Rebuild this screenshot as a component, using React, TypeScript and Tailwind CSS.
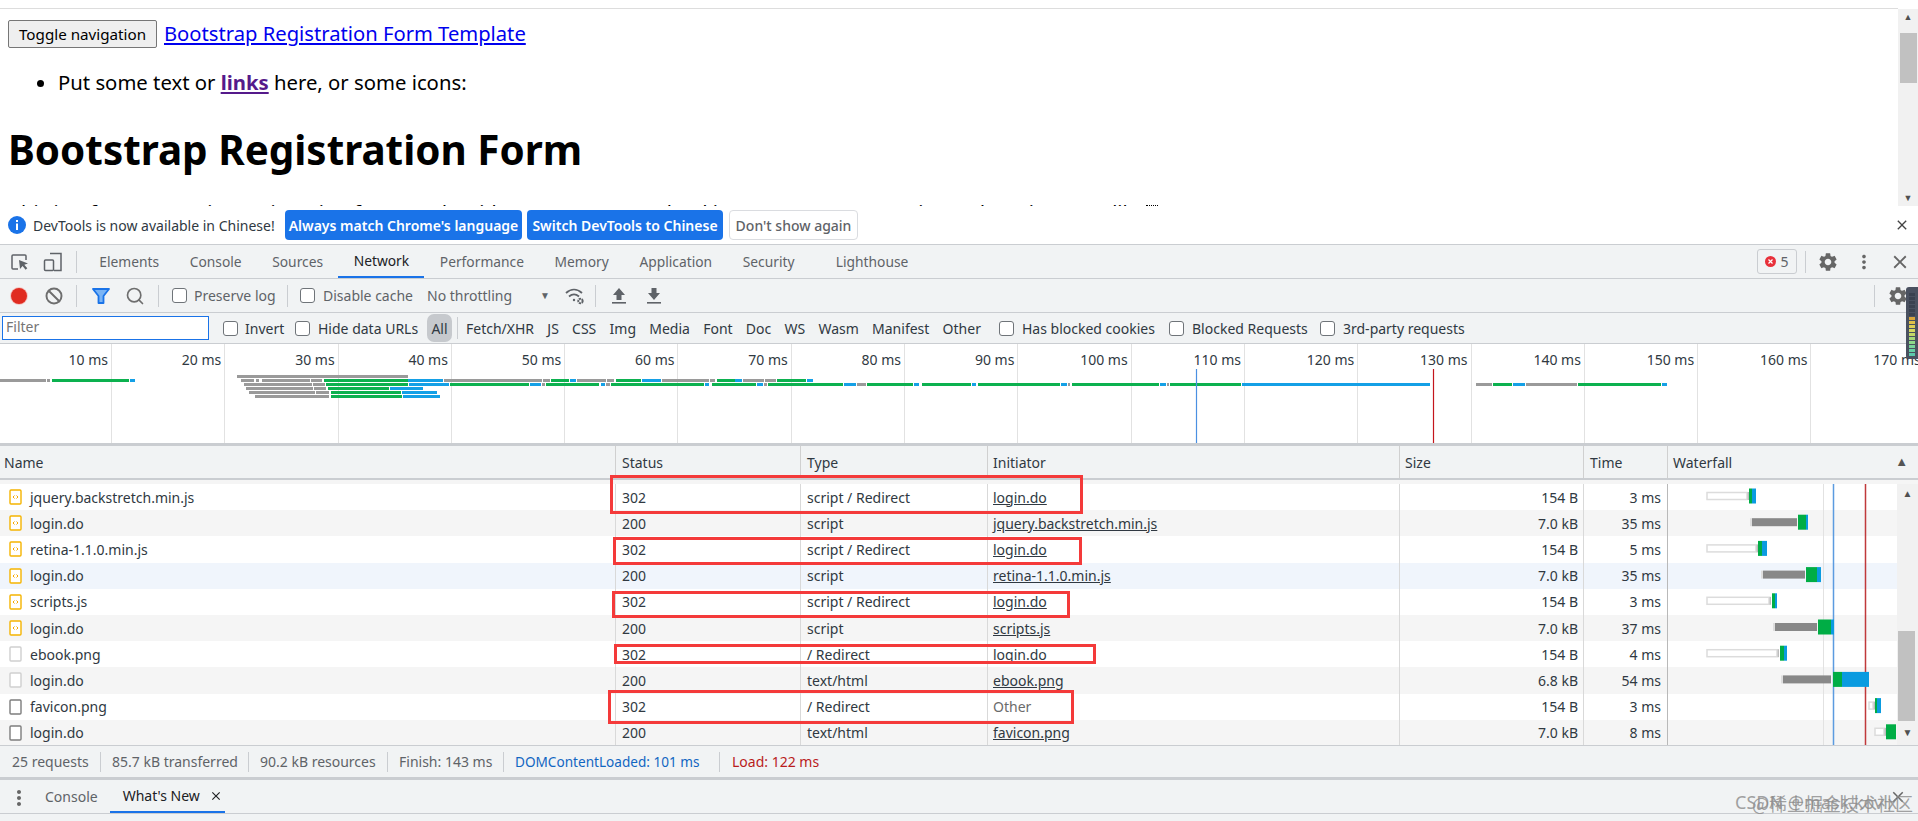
import React from 'react';
import { MdClose, MdMoreVert, MdSettings } from 'react-icons/md';
import { Ban, Search } from 'lucide-react';

const tabs = [
  { label: 'Elements', cls: 'px-[15.3px] text-[#5f6368]' },
  { label: 'Console', cls: 'px-[15.3px] text-[#5f6368]' },
  { label: 'Sources', cls: 'px-[15.3px] text-[#5f6368]' },
  { label: 'Network', cls: 'px-[15.3px] text-[#202124] border-b-[2px] border-[#1a73e8]' },
  { label: 'Performance', cls: 'px-[15.3px] text-[#5f6368]' },
  { label: 'Memory', cls: 'px-[15.3px] text-[#5f6368]' },
  { label: 'Application', cls: 'px-[15.3px] text-[#5f6368]' },
  { label: 'Security', cls: 'px-[15.3px] text-[#5f6368]' },
  { label: 'Lighthouse', cls: 'pl-[26px] pr-[15px] text-[#5f6368]' },
];

const kinds = ['Fetch/XHR', 'JS', 'CSS', 'Img', 'Media', 'Font', 'Doc', 'WS', 'Wasm', 'Manifest', 'Other'];
const ticks = [10, 20, 30, 40, 50, 60, 70, 80, 90, 100, 110, 120, 130, 140, 150, 160, 170];

const rows = [
  { name: 'jquery.backstretch.min.js', status: '302', type: 'script / Redirect', init: 'login.do', size: '154 B', time: '3 ms', icon: 'js', bg: 'bg-white' },
  { name: 'login.do', status: '200', type: 'script', init: 'jquery.backstretch.min.js', size: '7.0 kB', time: '35 ms', icon: 'js', bg: 'bg-[#f5f5f5]' },
  { name: 'retina-1.1.0.min.js', status: '302', type: 'script / Redirect', init: 'login.do', size: '154 B', time: '5 ms', icon: 'js', bg: 'bg-white' },
  { name: 'login.do', status: '200', type: 'script', init: 'retina-1.1.0.min.js', size: '7.0 kB', time: '35 ms', icon: 'js', bg: 'bg-[#f0f5fc]' },
  { name: 'scripts.js', status: '302', type: 'script / Redirect', init: 'login.do', size: '154 B', time: '3 ms', icon: 'js', bg: 'bg-white' },
  { name: 'login.do', status: '200', type: 'script', init: 'scripts.js', size: '7.0 kB', time: '37 ms', icon: 'js', bg: 'bg-[#f5f5f5]' },
  { name: 'ebook.png', status: '302', type: '/ Redirect', init: 'login.do', size: '154 B', time: '4 ms', icon: 'light', bg: 'bg-white' },
  { name: 'login.do', status: '200', type: 'text/html', init: 'ebook.png', size: '6.8 kB', time: '54 ms', icon: 'light', bg: 'bg-[#f5f5f5]' },
  { name: 'favicon.png', status: '302', type: '/ Redirect', init: 'Other', size: '154 B', time: '3 ms', icon: 'dark', bg: 'bg-white' },
  { name: 'login.do', status: '200', type: 'text/html', init: 'favicon.png', size: '7.0 kB', time: '8 ms', icon: 'dark', bg: 'bg-[#f5f5f5]' },
];

const redBoxes = [
  'left-[610px] top-[475px] w-[473px] h-[39px]',
  'left-[613px] top-[537px] w-[469px] h-[28px]',
  'left-[612px] top-[591px] w-[458px] h-[27px]',
  'left-[614px] top-[644px] w-[482px] h-[20px]',
  'left-[608px] top-[690px] w-[466px] h-[34px]',
];

const meter = [
  'bg-[#3b4250]', 'bg-[#3b4250]', 'bg-[#3b4250]', 'bg-[#3b4250]', 'bg-[#3b4250]', 'bg-[#3b4250]',
  'bg-[#d9a53a]', 'bg-[#dfc04a]', 'bg-[#dccf55]', 'bg-[#d5d860]', 'bg-[#c2d868]', 'bg-[#a5d878]',
  'bg-[#8ed88a]', 'bg-[#78d49a]', 'bg-[#66cfa5]', 'bg-[#5cc9ab]',
];

const G = '#0cb14f';
const B = '#14a0e6';
const S = '#9a9a9a';

// overview segments: y, then x1, x2, colour
const overview: [number, number, number, string][] = [
  [379, 0, 46, S], [379, 47, 50, S], [379, 52, 129, G], [379, 130, 135, B],
  [375, 237, 408, S],
  [379, 241, 254, S], [379, 256, 259, S], [379, 262, 310, S], [379, 311, 322, S], [379, 324, 408, G], [379, 408, 443, B],
  [379, 444, 542, S], [379, 543, 550, S], [379, 551, 569, G], [379, 570, 576, B], [379, 577, 606, S], [379, 607, 614, S],
  [379, 616, 641, G], [379, 642, 661, B], [379, 662, 709, S], [379, 710, 715, S], [379, 717, 735, G], [379, 735, 742, B],
  [379, 743, 764, S], [379, 765, 776, S], [379, 777, 806, G], [379, 807, 813, B],
  [383, 244, 312, S], [383, 313, 325, S], [383, 326, 408, G], [383, 409, 449, B], [383, 450, 529, G], [383, 530, 541, B],
  [383, 542, 545, S], [383, 546, 599, G], [383, 601, 605, B], [383, 606, 610, S], [383, 611, 704, G], [383, 705, 709, B],
  [383, 712, 756, G], [383, 757, 763, B], [383, 764, 767, S], [383, 768, 843, G], [383, 844, 856, B], [383, 857, 866, S],
  [383, 867, 913, G], [383, 914, 919, B], [383, 922, 971, G], [383, 972, 976, B], [383, 978, 1060, G], [383, 1061, 1067, B],
  [383, 1068, 1070, S], [383, 1072, 1159, G], [383, 1160, 1166, B], [383, 1167, 1169, S], [383, 1170, 1241, G], [383, 1242, 1430, B],
  [383, 1476, 1492, S], [383, 1493, 1512, G], [383, 1513, 1525, B], [383, 1526, 1577, S], [383, 1578, 1661, G], [383, 1662, 1667, B],
  [387, 246, 313, S], [387, 314, 326, S], [387, 328, 389, G], [387, 390, 423, B],
  [391, 249, 315, S], [391, 316, 329, S], [391, 331, 401, G], [391, 402, 437, B],
  [395, 255, 329, S], [395, 331, 402, G], [395, 403, 440, B],
];

// waterfall bars: wait x1..x2 (white box or grey), green x1..x2, blue end
const bars = [
  { wait: [1707, 1747], white: true, g: [1749, 1752], b: 1756 },
  { wait: [1752, 1797], white: false, g: [1798, 1806], b: 1808 },
  { wait: [1707, 1756], white: true, g: [1758, 1762], b: 1767 },
  { wait: [1763, 1805], white: false, g: [1806, 1817], b: 1821 },
  { wait: [1707, 1769], white: true, g: [1772, 1775], b: 1777 },
  { wait: [1775, 1817], white: false, g: [1818, 1831], b: 1834 },
  { wait: [1707, 1777], white: true, g: [1780, 1784], b: 1787 },
  { wait: [1783, 1831], white: false, g: [1833, 1842], b: 1869 },
  { wait: [1869, 1873], white: true, g: [1875, 1877], b: 1881 },
  { wait: [1875, 1884], white: true, g: [1886, 1896], b: 1896 },
];

function CheckBox() {
  return <span className="block w-[15px] h-[15px] rounded-[3px] border border-[#6f7479] bg-white shrink-0" />;
}

function Sep({ cls = '' }: { cls?: string }) {
  return <span className={`w-px h-[22px] bg-[#cacdd1] shrink-0 ${cls}`} />;
}

function FileIcon({ kind }: { kind: string }) {
  const stroke = kind === 'js' ? '#f5b400' : kind === 'light' ? '#cfcfcf' : '#7d7d7d';
  return (
    <svg width="14" height="16" viewBox="0 0 14 16" className="ml-[9px] mr-[7px] shrink-0">
      <rect x="1" y="1" width="11" height="14" rx="1" fill="#fff" stroke={stroke} strokeWidth="1.4" />
      {kind === 'js' && <path d="M5.5 6.5 4 8l1.5 1.5M7.5 6.5 9 8 7.5 9.5" fill="none" stroke="#f5a800" strokeWidth="1" />}
    </svg>
  );
}

function Waterfall() {
  return (
    <svg className="absolute left-[1668px] top-0 pointer-events-none" width="229" height="261" viewBox="1668 0 229 261">
      <line x1="1823.5" x2="1823.5" y1="0" y2="261" stroke="#e2e2e2" />
      <line x1="1833.5" x2="1833.5" y1="0" y2="261" stroke="#5b9be0" strokeWidth="1.5" />
      <line x1="1865.5" x2="1865.5" y1="0" y2="261" stroke="#c0393b" strokeWidth="1.5" />
      {bars.map((b, i) => {
        const y = 12 + i * 26.2;
        return (
          <g key={i}>
            {b.white ? (
              <>
                <rect x={b.wait[0]} y={y - 3.5} width={b.wait[1] - b.wait[0]} height={7} fill="#fff" stroke="#dcdcdc" strokeWidth="1.5" />
                <rect x={b.wait[1] + 0.5} y={y - 4} width={1.5} height={8} fill="#bdbdbd" />
              </>
            ) : (
              <>
                <rect x={b.wait[0] - 2} y={y - 4} width={2} height={8} fill="#dedede" />
                <rect x={b.wait[0]} y={y - 4} width={b.wait[1] - b.wait[0]} height={8} fill="#888" />
              </>
            )}
            <rect x={b.g[0]} y={y - 7.5} width={b.g[1] - b.g[0]} height={15} fill="#00ad45" />
            <rect x={b.g[1]} y={y - 7.5} width={b.b - b.g[1]} height={15} fill="#0a9be0" />
          </g>
        );
      })}
    </svg>
  );
}

export default function App() {
  return (
    <div className="relative w-[1918px] h-[821px] overflow-hidden flex flex-col bg-[#f1f3f4] font-['Noto_Sans',sans-serif] text-[14px]">
      {/* inspected page */}
      <div className="h-[206px] bg-white flex shrink-0 overflow-hidden">
        <div className="flex-1 overflow-hidden">
          <div className="h-[9px] border-b border-[#dddddd]" />
          <div className="flex items-center pl-[8px] pt-[11px]">
            <button className="w-[149px] h-[28px] border border-[#767676] rounded-[2px] bg-[#efefef] text-black text-[15.2px] font-['Noto_Sans',sans-serif]">Toggle navigation</button>
            <a className="ml-[7px] mb-[2px] text-[20.2px] leading-[24px] text-[#0000ee] underline">Bootstrap Registration Form Template</a>
          </div>
          <ul className="mt-[21px] ml-[40px] list-disc pl-[18px] text-[20.3px] leading-[26px] text-black">
            <li>Put some text or <a className="font-bold underline text-[#551a8b]">links</a> here, or some icons:</li>
          </ul>
          <h1 className="mt-[28px] ml-[8px] text-[40.4px] leading-[54px] font-bold text-black">Bootstrap Registration Form</h1>
          <p className="mt-[22px] ml-[10px] text-[20px] leading-[28px] whitespace-nowrap text-black">This is a free responsive registration form made with Bootstrap. Download it on AZMIND, customize and use it as you like!</p>
        </div>
        <div className="w-[20px] mt-[9px] bg-[#f1f1f1] flex flex-col items-center relative">
          <span className="text-[9px] leading-[16px] text-[#505050]">▲</span>
          <span className="absolute top-[24px] w-[17px] h-[50px] bg-[#c1c1c1]" />
          <span className="absolute bottom-0 text-[9px] leading-[16px] text-[#505050]">▼</span>
        </div>
      </div>

      {/* language bar */}
      <div className="h-[38px] bg-white flex items-center shrink-0 py-[4px] text-[#303942]">
        <svg width="18" height="18" viewBox="0 0 18 18" className="ml-[8px] mr-[7px]">
          <circle cx="9" cy="9" r="9" fill="#1a73e8" />
          <rect x="8" y="7.5" width="2" height="6.5" fill="#fff" />
          <rect x="8" y="4" width="2" height="2" fill="#fff" />
        </svg>
        <span className="w-[252px]">DevTools is now available in Chinese!</span>
        <span className="w-[237px] h-[30px] rounded-[4px] bg-[#1a73e8] text-white font-semibold flex items-center justify-center">Always match Chrome's language</span>
        <span className="ml-[5px] w-[196px] h-[30px] rounded-[4px] bg-[#1a73e8] text-white font-semibold flex items-center justify-center">Switch DevTools to Chinese</span>
        <span className="ml-[6px] w-[129px] h-[30px] rounded-[4px] border border-[#dadce0] text-[#5f6368] font-medium flex items-center justify-center">Don't show again</span>
        <MdClose className="ml-auto mr-[8px] text-[#444] w-[16px] h-[16px]" />
      </div>

      {/* tabs */}
      <div className="h-[35px] flex items-stretch border-y border-[#cacdd1] shrink-0">
        <div className="w-[76px] flex items-center shrink-0">
          <svg width="20" height="20" viewBox="0 0 20 20" className="ml-[10px]" fill="none">
            <path d="M8 17H3a1 1 0 0 1-1-1V4a1 1 0 0 1 1-1h12a1 1 0 0 1 1 1v4" stroke="#5f6368" strokeWidth="1.5" />
            <path d="m9 8 9 3.5-3.7 1.2 3 3.6-1.7 1.5-3-3.7L10 17z" fill="#5f6368" />
          </svg>
          <svg width="20" height="20" viewBox="0 0 20 20" className="ml-[13px]" fill="none" stroke="#5f6368" strokeWidth="1.5">
            <path d="M7 1.5h11v17H11" />
            <rect x="1.5" y="8" width="9" height="10.5" rx="1" />
          </svg>
        </div>
        <Sep cls="self-center" />
        <div className="flex items-stretch ml-[7px] text-[13.8px]">
          {tabs.map((t) => (
            <span key={t.label} className={`flex items-center pt-[1px] ${t.cls}`}>{t.label}</span>
          ))}
        </div>
        <div className="ml-auto flex items-center pr-[7px]">
          <span className="w-[40px] h-[25px] rounded-[3px] border border-[#cacdd1] flex items-center justify-center gap-[4px] text-[#5f6368]">
            <svg width="11" height="11" viewBox="0 0 11 11"><circle cx="5.5" cy="5.5" r="5.5" fill="#e8303a" /><path d="m3.5 3.5 4 4m0-4-4 4" stroke="#fff" strokeWidth="1.2" /></svg>
            5
          </span>
          <Sep cls="ml-[8px] h-[20px]" />
          <MdSettings className="ml-[11px] w-[22px] h-[22px] text-[#666]" />
          <MdMoreVert className="ml-[14px] w-[22px] h-[22px] text-[#666]" />
          <MdClose className="ml-[14px] w-[22px] h-[22px] text-[#666]" />
        </div>
      </div>

      {/* toolbar */}
      <div className="h-[34px] flex items-center border-b border-[#cacdd1] shrink-0 text-[#5f6368]">
        <span className="ml-[11px] w-[16px] h-[16px] rounded-full bg-[#e02b20] ring-1 ring-[#f4c7c3]" />
        <Ban className="ml-[18px] w-[18px] h-[18px] text-[#6e6e6e]" strokeWidth={2.6} />
        <Sep cls="ml-[13px]" />
        <svg width="18" height="18" viewBox="0 0 18 18" className="ml-[15px]">
          <path d="M1 2h16l-5.5 7v7h-5V9z" fill="#7ab4f5" stroke="#1a73e8" strokeWidth="1.8" strokeLinejoin="round" />
        </svg>
        <Search className="ml-[15px] w-[20px] h-[20px] text-[#6e6e6e]" strokeWidth={2} />
        <Sep cls="ml-[13px]" />
        <span className="ml-[13px]"><CheckBox /></span>
        <span className="ml-[7px] w-[93px]">Preserve log</span>
        <Sep />
        <span className="ml-[12px]"><CheckBox /></span>
        <span className="ml-[8px] w-[104px]">Disable cache</span>
        <span className="w-[113px]">No throttling</span>
        <span className="w-[21px] text-[10px]">▼</span>
        <svg width="22" height="20" viewBox="0 0 22 20" className="ml-[3px]" fill="none" stroke="#5f6368" strokeWidth="1.8">
          <path d="M2 7c5-4.5 11-4.5 16 0M5 10.5c3-2.5 7-2.5 10 0" />
          <circle cx="10" cy="14" r="1.2" fill="#5f6368" stroke="none" />
          <circle cx="16.5" cy="15" r="2.2" strokeWidth="2" strokeDasharray="2 0.6" />
        </svg>
        <Sep cls="ml-[9px]" />
        <svg width="16" height="18" viewBox="0 0 16 18" className="ml-[15px]" fill="#5f6368">
          <path d="M8 1 14 8h-3.5v5h-5V8H2z" /><rect x="1" y="15" width="14" height="1.6" />
        </svg>
        <svg width="16" height="18" viewBox="0 0 16 18" className="ml-[19px]" fill="#5f6368">
          <path d="M8 13 2 6h3.5V1h5v5H14z" /><rect x="1" y="15" width="14" height="1.6" />
        </svg>
        <Sep cls="ml-auto mr-[12px]" />
        <MdSettings className="mr-[9px] w-[22px] h-[22px] text-[#666]" />
      </div>

      {/* filter row */}
      <div className="h-[31px] flex items-center border-b border-[#cacdd1] shrink-0 text-[#303942]">
        <span className="ml-[2px] w-[207px] h-[24px] bg-white border-[1.5px] border-[#1a73e8] text-[#757575] pl-[3px] leading-[20px]">Filter</span>
        <span className="ml-[14px]"><CheckBox /></span>
        <span className="ml-[7px] w-[38px]">Invert</span>
        <span className="ml-[12px]"><CheckBox /></span>
        <span className="ml-[8px] w-[101px] whitespace-nowrap">Hide data URLs</span>
        <span className="ml-[8px] w-[25px] h-[28px] rounded-[7px] bg-[#c6c9cd] flex items-center justify-center">All</span>
        <Sep cls="ml-[5px]" />
        <div className="ml-[8px] w-[515px] flex justify-between">
          {kinds.map((k) => <span key={k}>{k}</span>)}
        </div>
        <span className="ml-[18px]"><CheckBox /></span>
        <span className="ml-[8px] w-[135px] whitespace-nowrap">Has blocked cookies</span>
        <span className="ml-[12px]"><CheckBox /></span>
        <span className="ml-[8px] w-[115px] whitespace-nowrap">Blocked Requests</span>
        <span className="ml-[13px]"><CheckBox /></span>
        <span className="ml-[8px] whitespace-nowrap">3rd-party requests</span>
      </div>

      {/* overview */}
      <div className="relative h-[102px] flex bg-white border-b-[3px] border-[#cacdd1] shrink-0 overflow-hidden text-[#303942]">
        {ticks.map((t) => (
          <div key={t} className="w-[113.3px] first:w-[112px] shrink-0 border-r border-[#e2e2e2] text-right pr-[3px] pt-[6px] leading-[19px]">
            {t} ms
          </div>
        ))}
        <svg className="absolute left-0 top-0" width="1918" height="99" viewBox="0 344 1918 99">
          {overview.map(([y, a, b, c], i) => (
            <rect key={i} x={a} y={y} width={b - a} height="3" fill={c} />
          ))}
          <line x1="1196.5" x2="1196.5" y1="369" y2="444" stroke="#4a90e2" strokeWidth="1.2" />
          <line x1="1433.5" x2="1433.5" y1="369" y2="444" stroke="#c4151c" strokeWidth="1.2" />
        </svg>
      </div>

      {/* table header */}
      <div className="h-[34px] grid grid-cols-[616px_185px_187px_412px_184px_84px_1fr] border-b-[2px] border-[#cacdd1] shrink-0 text-[#303942]">
        <span className="flex items-center pl-[4px] border-r border-[#d0d0d0]">Name</span>
        <span className="flex items-center pl-[6px] border-r border-[#d0d0d0]">Status</span>
        <span className="flex items-center pl-[6px] border-r border-[#d0d0d0]">Type</span>
        <span className="flex items-center pl-[5px] border-r border-[#d0d0d0]">Initiator</span>
        <span className="flex items-center pl-[5px] border-r border-[#d0d0d0]">Size</span>
        <span className="flex items-center pl-[6px] border-r border-[#d0d0d0]">Time</span>
        <span className="flex items-center pl-[5px] pr-[10px] justify-between">Waterfall<span className="text-[13px] text-[#555]">▲</span></span>
      </div>
      <div className="h-[4px] shrink-0 bg-[#f5f5f5]" />

      {/* table rows */}
      <div className="relative h-[261px] overflow-hidden shrink-0 text-[#303942]">
        {rows.map((r, i) => (
          <div key={i} className={`h-[26.2px] grid grid-cols-[616px_185px_187px_412px_184px_84px_1fr] ${r.bg}`}>
            <span className="flex items-center border-r border-[#d9d9d9] overflow-hidden"><FileIcon kind={r.icon} />{r.name}</span>
            <span className="flex items-center pl-[6px] border-r border-[#d9d9d9]">{r.status}</span>
            <span className="flex items-center pl-[6px] border-r border-[#d9d9d9]">{r.type}</span>
            <span className={`flex items-center pl-[5px] border-r border-[#d9d9d9] ${r.init === 'Other' ? 'text-[#6b6b6b]' : 'underline'}`}>{r.init}</span>
            <span className="flex items-center justify-end pr-[5px] border-r border-[#d9d9d9]">{r.size}</span>
            <span className="flex items-center justify-end pr-[6px] border-r border-[#b9b9b9]">{r.time}</span>
            <span />
          </div>
        ))}
        <Waterfall />
        <div className="absolute right-0 top-0 bottom-0 w-[21px] bg-[#f1f1f1] flex flex-col items-center">
          <span className="text-[10px] leading-[18px] text-[#505050]">▲</span>
          <span className="absolute top-[147px] left-[1px] w-[17px] h-[90px] bg-[#c1c1c1]" />
          <span className="absolute bottom-[4px] text-[10px] leading-[18px] text-[#505050]">▼</span>
        </div>
      </div>

      {/* status bar */}
      <div className="h-[35px] flex items-center border-t border-b-[3px] border-[#cacdd1] shrink-0 text-[#5f6368] whitespace-nowrap">
        <span className="w-[101px] pl-[12px] border-r border-[#cacdd1] leading-[20px]">25 requests</span>
        <span className="w-[148px] pl-[11px] border-r border-[#cacdd1] leading-[20px]">85.7 kB transferred</span>
        <span className="w-[139px] pl-[11px] border-r border-[#cacdd1] leading-[20px]">90.2 kB resources</span>
        <span className="w-[116px] pl-[11px] border-r border-[#cacdd1] leading-[20px]">Finish: 143 ms</span>
        <span className="w-[216px] pl-[11px] border-r border-[#cacdd1] leading-[20px] text-[13.6px] text-[#1166c2]">DOMContentLoaded: 101 ms</span>
        <span className="pl-[12px] leading-[20px] text-[#b91c1c]">Load: 122 ms</span>
      </div>

      {/* drawer */}
      <div className="h-[34px] flex items-stretch border-b border-[#cacdd1] shrink-0 text-[#5f6368]">
        <MdMoreVert className="ml-[7px] mt-[6px] w-[24px] h-[24px] text-[#666]" />
        <span className="ml-[14px] flex items-center">Console</span>
        <span className="ml-[12px] pl-[13px] w-[115px] flex items-center gap-[9px] text-[#202124] border-b-[2px] border-[#1a73e8]">What's New<MdClose className="w-[14px] h-[14px]" /></span>
        <MdClose className="ml-auto mr-[11px] mt-[8px] w-[18px] h-[18px] text-[#666]" />
      </div>
      <div className="flex-1" />

      {/* annotations */}
      {redBoxes.map((b) => (
        <div key={b} className={`absolute border-[3px] border-[#f43a3a] ${b}`} />
      ))}
      <span className="absolute left-[1146px] top-[205px] w-[12px] border-t border-dotted border-black" />
      <div className="absolute left-[1906px] top-[287px] w-[12px] h-[72px] rounded-l-[3px] bg-[#4a5160] flex flex-col justify-end gap-px px-[3px] pb-[3px]">
        {meter.map((m, i) => <div key={i} className={`h-[3px] shrink-0 ${m}`} />)}
      </div>

      {/* watermark */}
      <span className="absolute left-[1735px] top-[790px] text-[18px] leading-[24px] text-[#8a8a8a]/80 whitespace-nowrap">CSDN @mask.kovlx</span>
      <span className="absolute left-[1752px] top-[791px] text-[18px] leading-[24px] text-[#8a8a8a]/80 whitespace-nowrap font-['Noto_Sans_CJK_SC','Noto_Sans',sans-serif]">@稀土掘金技术社区</span>
    </div>
  );
}
